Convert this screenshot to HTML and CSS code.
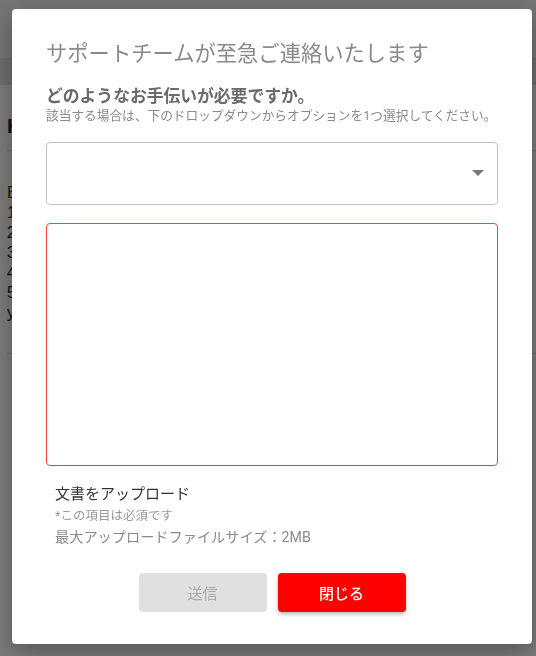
FILE: index.html
```html
<!DOCTYPE html>
<html lang="ja">
<head>
<meta charset="utf-8">
<title>サポート</title>
<link rel="stylesheet" href="styles.css">
</head>
<body>
<div class="page">
  <header class="page-header">
    <div class="header-top"></div>
    <div class="header-band"></div>
  </header>
  <main class="page-main">
    <h2 class="page-title">Help</h2>
    <div class="page-list">
      <p class="accent">Before contacting support</p>
      <p class="accent">1. Check the FAQ</p>
      <p>2. Restart the app</p>
      <p>3. Update to the latest version</p>
      <p>4. Check your connection</p>
      <p>5. Clear the cache</p>
      <p>you can contact us below</p>
    </div>
  </main>
</div>

<div class="overlay">
  <div class="dialog">
    <h1 class="dialog-title">サポートチームが至急ご連絡いたします</h1>
    <h2 class="dialog-sub">どのようなお手伝いが必要ですか。</h2>
    <p class="dialog-hint">該当する場合は、下のドロップダウンからオプションを1つ選択してください。</p>
    <div class="select-box"><span class="select-arrow"></span></div>
    <div class="text-box"></div>
    <div class="upload">
      <div class="upload-label">文書をアップロード</div>
      <div class="upload-req">*この項目は必須です</div>
      <div class="upload-max">最大アップロードファイルサイズ：2MB</div>
    </div>
    <div class="actions">
      <button class="btn btn-send" disabled>送信</button>
      <button class="btn btn-close">閉じる</button>
    </div>
  </div>
</div>
</body>
</html>
```

FILE: styles.css
```css
html, body {
  margin: 0;
  padding: 0;
}
body {
  width: 536px;
  height: 656px;
  overflow: hidden;
  font-family: Roboto, "Noto Sans CJK JP", sans-serif;
  background: #ffffff;
}
.page {
  height: 656px;
  background: #ffffff;
}
.page-header .header-top {
  height: 58px;
  background: #f2f2f2;
}
.page-header .header-band {
  height: 27px;
  background: #e2e2e2;
}
.page-main {
  padding: 0 0 0 7px;
  font-family: "Liberation Sans", sans-serif;
}
.page-title {
  margin: 0;
  padding: 29px 0 12px;
  font-size: 20px;
  line-height: 24px;
  color: #0d2235;
  border-bottom: 1px solid #e6e6e6;
}
.page-list {
  padding: 32px 0 30px;
  border-bottom: 1px solid #e6e6e6;
}
.page-list p {
  margin: 0;
  font-size: 16px;
  line-height: 20px;
  color: #1a1a2a;
}
.page-list p.accent {
  color: #5a3a10;
}

.overlay {
  position: fixed;
  inset: 0;
  background: rgba(0, 0, 0, 0.52);
}
.dialog {
  position: absolute;
  left: 12px;
  top: 9px;
  width: 520px;
  height: 635px;
  box-sizing: border-box;
  padding: 31px 34px 32px;
  background: #ffffff;
  border-radius: 4px;
  box-shadow: 0 8px 24px rgba(0, 0, 0, 0.3);
  display: flex;
  flex-direction: column;
}
.dialog-title {
  margin: 0;
  font-size: 21.3px;
  line-height: 28px;
  font-weight: 400;
  color: #8a8a8a;
  white-space: nowrap;
}
.dialog-sub {
  margin: 17px 0 0;
  font-size: 16.8px;
  line-height: 22px;
  font-weight: 700;
  color: #6a6a6a;
}
.dialog-hint {
  margin: 0;
  font-size: 12.7px;
  line-height: 18px;
  color: #8a8a8a;
  white-space: nowrap;
}
.select-box {
  margin-top: 17px;
  height: 63px;
  box-sizing: border-box;
  border: 1px solid #c4c4c4;
  border-radius: 4px;
  display: flex;
  align-items: center;
  justify-content: flex-end;
  padding-right: 13px;
}
.select-arrow {
  width: 0;
  height: 0;
  border-left: 6px solid transparent;
  border-right: 6px solid transparent;
  border-top: 6px solid #777777;
}
.text-box {
  margin-top: 18px;
  height: 244px;
  box-sizing: border-box;
  border: 1px solid #f44336;
  border-radius: 4px;
}
.upload {
  margin-top: 18px;
  padding-left: 9px;
}
.upload-label {
  font-size: 15px;
  line-height: 20px;
  color: #333333;
}
.upload-req {
  margin-top: 2px;
  font-size: 12.5px;
  line-height: 20px;
  color: #9a9a9a;
}
.upload-max {
  margin-top: 1px;
  font-size: 14.2px;
  line-height: 20px;
  color: #8a8a8a;
}
.actions {
  margin-top: 26px;
  display: flex;
  justify-content: center;
  gap: 11px;
}
.btn {
  width: 128px;
  height: 39px;
  border: none;
  border-radius: 4px;
  font-family: Roboto, "Noto Sans CJK JP", sans-serif;
  font-size: 15px;
  padding: 0;
}
.btn-send {
  background: #e0e0e0;
  color: #aaaaaa;
}
.btn-close {
  background: #ff0000;
  color: #ffffff;
  font-weight: 500;
  box-shadow: 0 2px 4px rgba(0, 0, 0, 0.3);
}
```
